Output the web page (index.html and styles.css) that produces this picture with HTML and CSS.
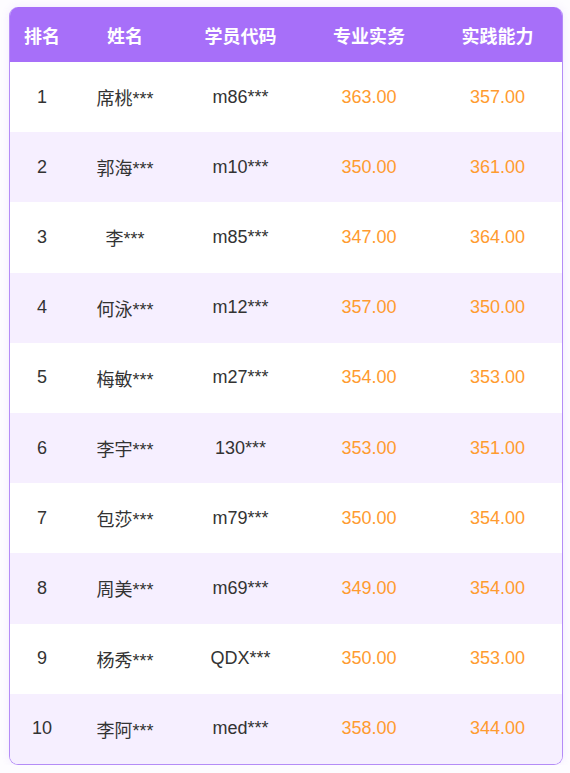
FILE: index.html
```html
<!DOCTYPE html>
<html lang="zh-CN">
<head>
<meta charset="utf-8">
<link rel="stylesheet" href="styles.css">
</head>
<body>
<div class="board">
  <table class="rank">
    <colgroup>
      <col class="c1"><col class="c2"><col class="c3"><col class="c4"><col class="c5">
    </colgroup>
    <thead>
      <tr><th>排名</th><th>姓名</th><th>学员代码</th><th>专业实务</th><th>实践能力</th></tr>
    </thead>
    <tbody>
      <tr><td>1</td><td>席桃***</td><td>m86***</td><td class="score">363.00</td><td class="score">357.00</td></tr>
      <tr><td>2</td><td>郭海***</td><td>m10***</td><td class="score">350.00</td><td class="score">361.00</td></tr>
      <tr><td>3</td><td>李***</td><td>m85***</td><td class="score">347.00</td><td class="score">364.00</td></tr>
      <tr><td>4</td><td>何泳***</td><td>m12***</td><td class="score">357.00</td><td class="score">350.00</td></tr>
      <tr><td>5</td><td>梅敏***</td><td>m27***</td><td class="score">354.00</td><td class="score">353.00</td></tr>
      <tr><td>6</td><td>李宇***</td><td>130***</td><td class="score">353.00</td><td class="score">351.00</td></tr>
      <tr><td>7</td><td>包莎***</td><td>m79***</td><td class="score">350.00</td><td class="score">354.00</td></tr>
      <tr><td>8</td><td>周美***</td><td>m69***</td><td class="score">349.00</td><td class="score">354.00</td></tr>
      <tr><td>9</td><td>杨秀***</td><td>QDX***</td><td class="score">350.00</td><td class="score">353.00</td></tr>
      <tr><td>10</td><td>李阿***</td><td>med***</td><td class="score">358.00</td><td class="score">344.00</td></tr>
    </tbody>
  </table>
</div>
</body>
</html>
```

FILE: styles.css
```css
html, body {
  margin: 0;
  padding: 0;
  background: #fdfcff;
}
body {
  padding: 7px 7px 0 9px;
  font-family: "Liberation Sans", "Noto Sans CJK SC", sans-serif;
}
.board {
  width: 554px;
  box-sizing: border-box;
  border: 1px solid #b48cf7;
  border-top: 0;
  border-radius: 9px;
  overflow: hidden;
  background: #fff;
  box-shadow: 0 0 8px rgba(166, 111, 249, 0.12);
}
.rank {
  width: 100%;
  border-collapse: collapse;
  table-layout: fixed;
}
.c1 { width: 64px; }
.c2 { width: 102px; }
.c3 { width: 129px; }
.c4 { width: 128px; }
.c5 { width: 129px; }
.rank th {
  height: 55px;
  padding: 0;
  background: #a76ff9;
  color: #fff;
  font-size: 18px;
  font-weight: bold;
  text-align: center;
  vertical-align: middle;
}
.rank td {
  height: 70.2px;
  padding: 0;
  text-align: center;
  vertical-align: middle;
  font-size: 18px;
  color: #333;
}
.rank tbody tr:nth-child(even) td {
  background: #f6efff;
}
.rank td.score {
  color: #ff9b2f;
}
```
